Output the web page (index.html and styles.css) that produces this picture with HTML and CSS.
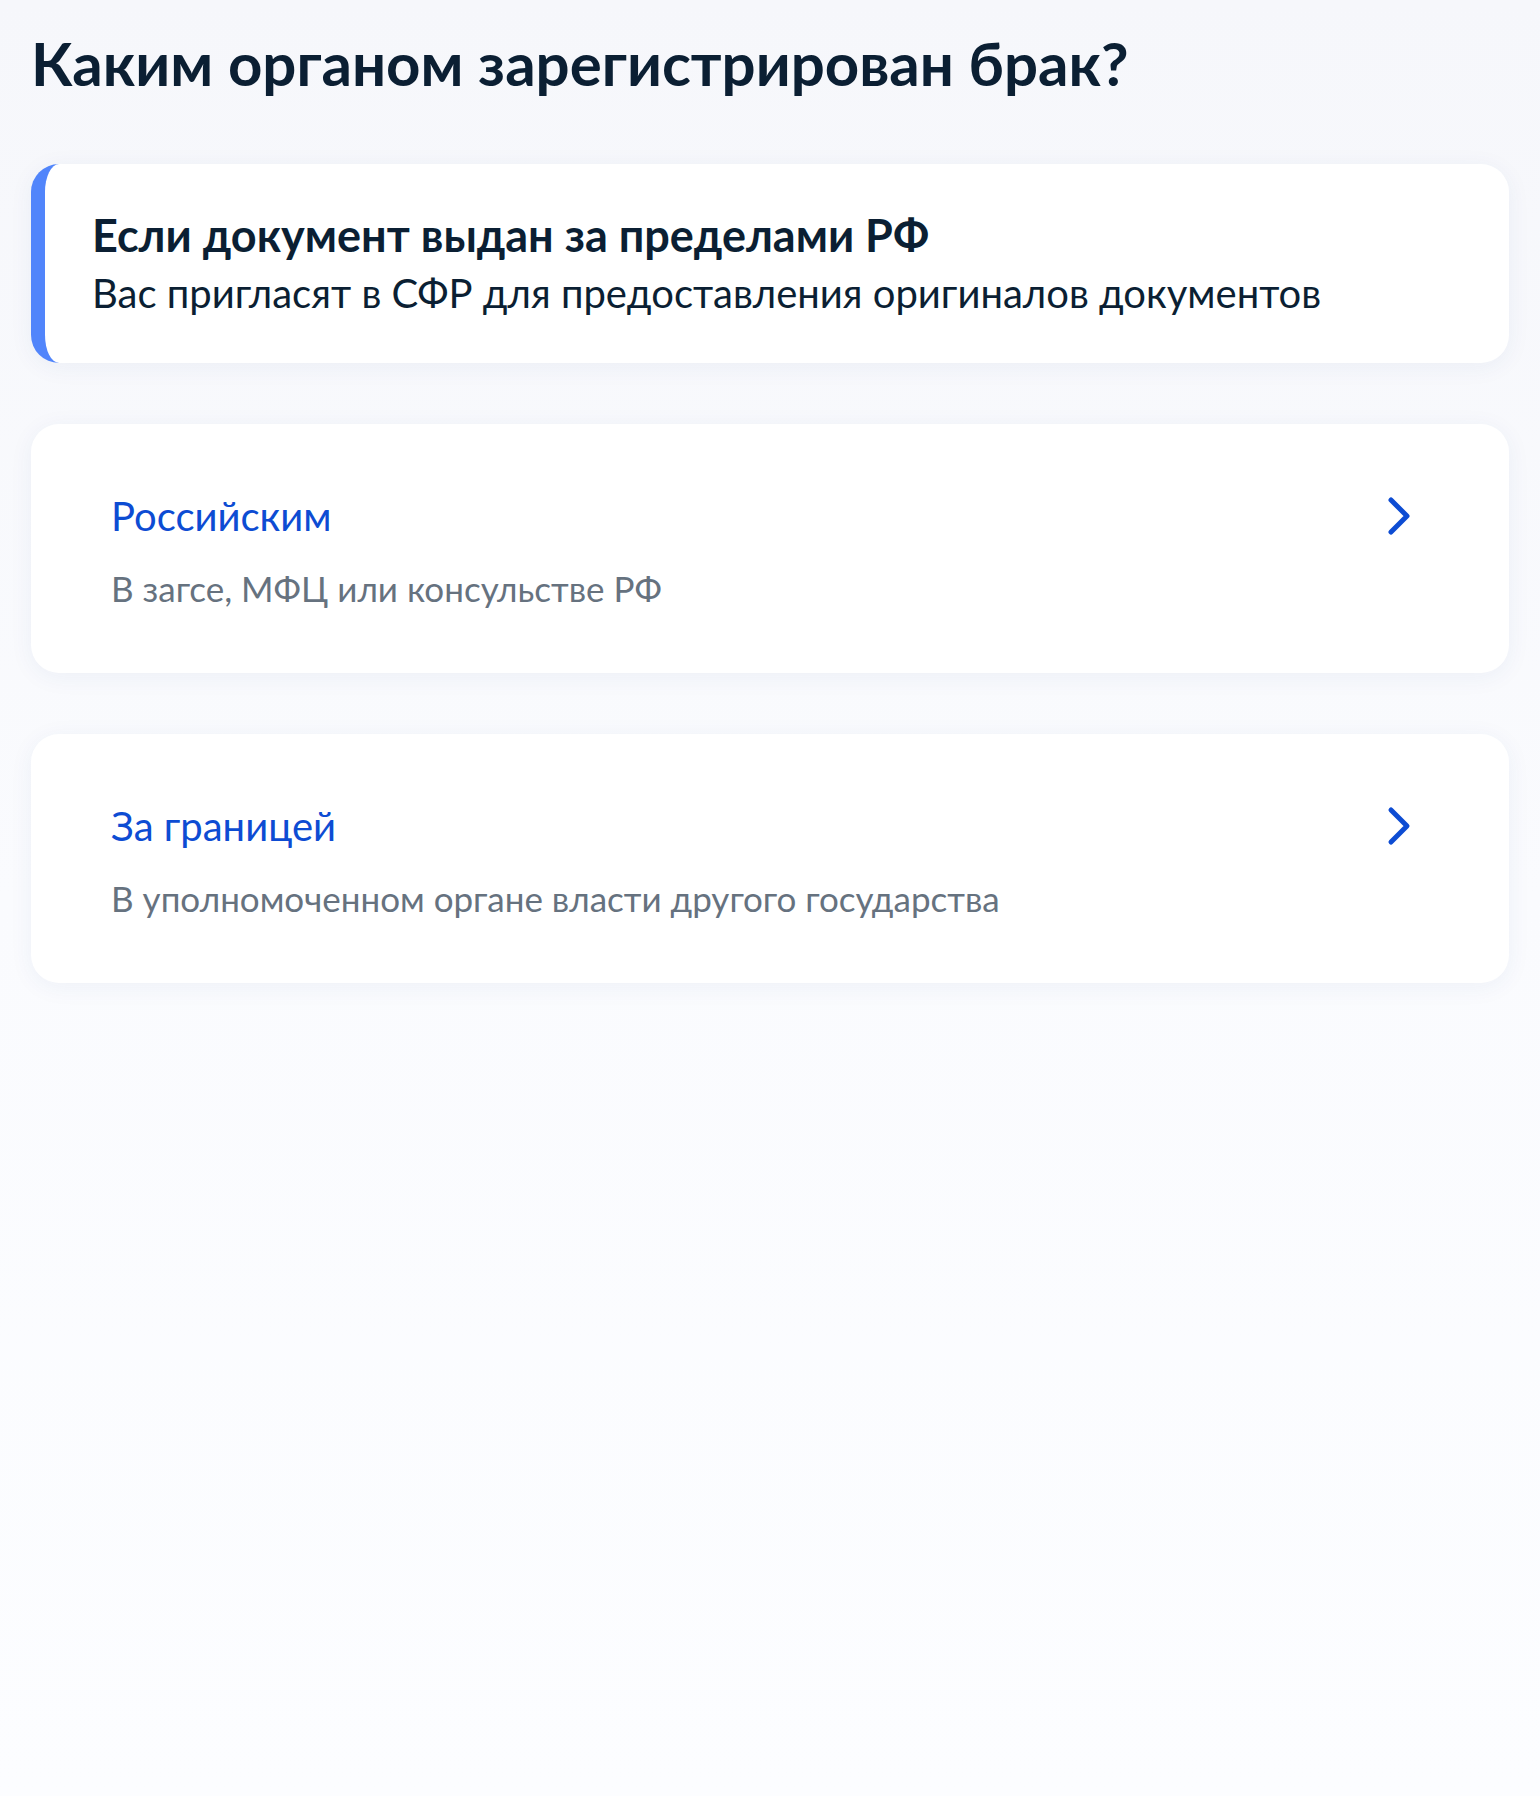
FILE: index.html
```html
<!DOCTYPE html>
<html lang="ru">
<head>
  <meta charset="UTF-8" />
  <meta name="viewport" content="width=device-width, initial-scale=1.0" />
  <title>Каким органом зарегистрирован брак?</title>
  <link rel="stylesheet" href="styles.css">
</head>
<body>
  <div class="page">
    <h1 class="title">Каким органом зарегистрирован брак?</h1>

    <div class="notice">
      <div class="notice-title">Если документ выдан за пределами РФ</div>
      <div class="notice-text">Вас пригласят в СФР для предоставления оригиналов документов</div>
    </div>

    <div class="options">
      <a class="option" href="#">
        <div class="option-head">
          <span class="option-title">Российским</span>
          <svg class="chevron" width="28" height="40" viewBox="0 0 28 40">
            <path d="M6 4 L22 20 L6 36" fill="none" stroke="#0d4cd3" stroke-width="5" stroke-linecap="round" stroke-linejoin="round"/>
          </svg>
        </div>
        <div class="option-text">В загсе, МФЦ или консульстве РФ</div>
      </a>

      <a class="option" href="#">
        <div class="option-head">
          <span class="option-title">За границей</span>
          <svg class="chevron" width="28" height="40" viewBox="0 0 28 40">
            <path d="M6 4 L22 20 L6 36" fill="none" stroke="#0d4cd3" stroke-width="5" stroke-linecap="round" stroke-linejoin="round"/>
          </svg>
        </div>
        <div class="option-text">В уполномоченном органе власти другого государства</div>
      </a>
    </div>
  </div>
</body>
</html>
```

FILE: styles.css
```css
body {
  margin: 0;
  min-height: 100vh;
  background: linear-gradient(180deg, #f6f7fb 0%, #fafbfe 50%, #fcfdff 100%);
  font-family: Lato, "Noto Sans", sans-serif;
  color: #0b1f33;
}
.page {
  padding: 27px 31px 40px;
  display: flex;
  flex-direction: column;
}
.title {
  margin: 0 0 65px;
  font-size: 60px;
  line-height: 72px;
  font-weight: 700;
  color: #0b1f33;
}
.notice {
  background: #fff;
  border-left: 14px solid #5185fb;
  border-radius: 28px;
  padding: 42px 40px 41px 47px;
  box-shadow: 0 4px 24px rgba(30, 60, 140, 0.06);
}
.notice-title {
  font-size: 45px;
  line-height: 58px;
  font-weight: 700;
}
.notice-text {
  font-size: 40px;
  line-height: 58px;
}
.options {
  margin-top: 61px;
  display: flex;
  flex-direction: column;
  gap: 61px;
}
.option {
  display: block;
  background: #fff;
  border-radius: 28px;
  padding: 68px 96px 63px 80px;
  text-decoration: none;
  box-shadow: 0 4px 24px rgba(30, 60, 140, 0.06);
}
.option-head {
  display: flex;
  justify-content: space-between;
  align-items: center;
  height: 48px;
}
.option-title {
  font-size: 40px;
  line-height: 48px;
  color: #0d4cd3;
}
.chevron {
  display: block;
}
.option-text {
  margin-top: 26px;
  font-size: 35px;
  line-height: 44px;
  color: #66727f;
}
```
